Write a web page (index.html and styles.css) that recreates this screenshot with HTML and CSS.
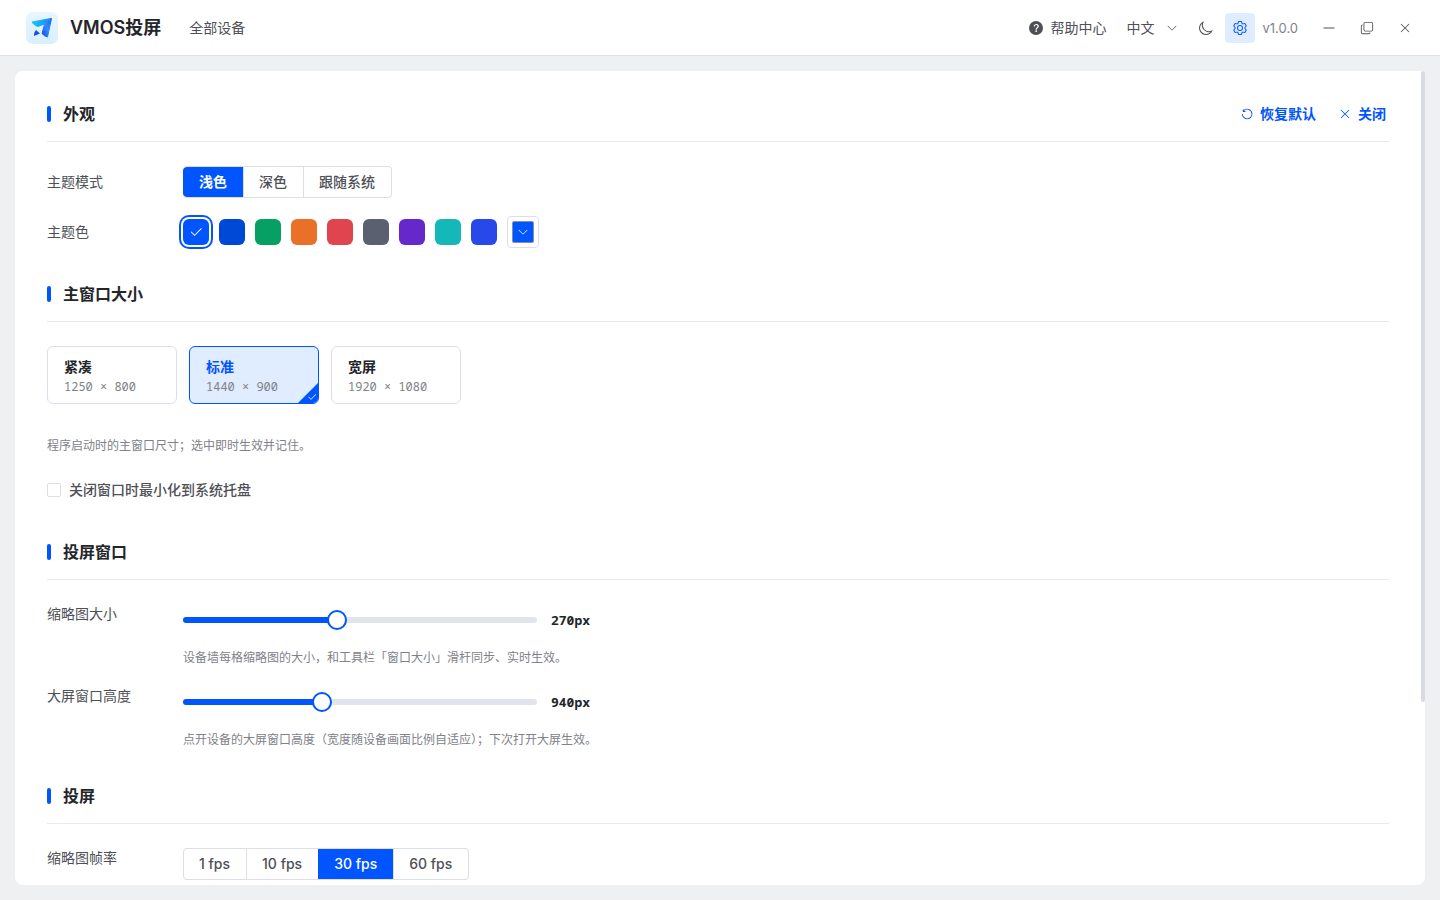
FILE: index.html
```html
<!DOCTYPE html>
<html lang="zh-CN">
<head>
<meta charset="utf-8">
<meta name="viewport" content="width=device-width, initial-scale=1">
<title>VMOS投屏</title>
<link rel="stylesheet" href="styles.css">
</head>
<body>
<svg class="sprite" aria-hidden="true">
  <symbol id="i-check" viewBox="0 0 1024 1024"><path d="M406.656 706.944 195.84 496.256a32 32 0 1 0-45.248 45.248l256 256 512-512a32 32 0 0 0-45.248-45.248L406.592 706.944z"/></symbol>
  <symbol id="i-down" viewBox="0 0 1024 1024"><path d="M831.872 340.864 512 652.672 192.128 340.864a30.592 30.592 0 0 0-42.752 0 29.12 29.12 0 0 0 0 41.6L489.664 714.24a32 32 0 0 0 44.672 0l340.288-331.712a29.12 29.12 0 0 0 0-41.728 30.592 30.592 0 0 0-42.752 0z"/></symbol>
  <symbol id="i-close" viewBox="0 0 1024 1024"><path d="M764.288 214.592 512 466.88 259.712 214.592a31.936 31.936 0 0 0-45.12 45.12L466.752 512 214.528 764.224a31.936 31.936 0 1 0 45.12 45.184L512 557.184l252.288 252.288a31.936 31.936 0 0 0 45.12-45.12L557.12 512.064l252.288-252.352a31.936 31.936 0 1 0-45.12-45.184z"/></symbol>
  <symbol id="i-help" viewBox="0 0 1024 1024"><path d="M512 64a448 448 0 1 1 0 896 448 448 0 0 1 0-896m23.744 191.488c-52.096 0-92.928 14.784-123.2 44.352-30.976 29.568-45.76 70.4-45.76 122.496h80.256c0-29.568 5.632-52.8 17.6-68.992 13.376-19.712 35.2-28.864 66.176-28.864 23.936 0 42.944 6.336 56.32 19.712 12.672 13.376 19.712 31.68 19.712 54.912 0 17.6-6.336 34.496-19.008 49.984l-8.448 9.856c-45.76 40.832-73.216 70.4-82.368 89.408-9.856 19.008-14.08 42.24-14.08 68.992v9.856h80.96v-9.856c0-16.896 3.52-31.68 10.56-45.76 6.336-12.672 15.488-24.64 28.16-35.2 33.792-29.568 54.208-48.576 60.544-55.616 16.896-22.528 26.048-51.392 26.048-86.592 0-42.944-14.08-76.736-42.24-101.376-28.16-25.344-65.472-37.312-111.232-37.312m-12.672 406.208a54.272 54.272 0 0 0-38.72 14.784 49.408 49.408 0 0 0-15.488 38.016c0 15.488 4.928 28.16 15.488 38.016A54.848 54.848 0 0 0 523.072 768c15.488 0 28.16-4.928 38.72-14.784a51.52 51.52 0 0 0 16.192-38.72 51.968 51.968 0 0 0-15.488-38.016 55.936 55.936 0 0 0-39.424-14.784z"/></symbol>
  <symbol id="i-moon" viewBox="0 0 1024 1024"><path d="M240.448 240.448a384 384 0 1 0 559.424 525.696 448 448 0 0 1-542.016-542.08 390.592 390.592 0 0 0-17.408 16.384zm181.056 362.048a384 384 0 0 0 525.632 16.384A448 448 0 1 1 405.056 76.8a384 384 0 0 0 16.448 525.696z"/></symbol>
  <symbol id="i-gear" viewBox="0 0 1024 1024"><path d="M600.704 64a32 32 0 0 1 30.464 22.208l35.2 109.376c14.784 7.232 28.928 15.36 42.432 24.512l112.384-24.192a32 32 0 0 1 34.432 15.36L944.32 364.8a32 32 0 0 1-4.032 37.504l-77.12 85.12a357.12 357.12 0 0 1 0 49.024l77.12 85.248a32 32 0 0 1 4.032 37.504l-88.704 153.6a32 32 0 0 1-34.432 15.296L708.8 803.904c-13.44 9.088-27.648 17.28-42.368 24.512l-35.264 109.376A32 32 0 0 1 600.704 960H423.296a32 32 0 0 1-30.464-22.208L357.696 828.48a351.616 351.616 0 0 1-42.56-24.64l-112.32 24.256a32 32 0 0 1-34.432-15.36L79.68 659.2a32 32 0 0 1 4.032-37.504l77.12-85.248a357.12 357.12 0 0 1 0-48.896l-77.12-85.248A32 32 0 0 1 79.68 364.8l88.704-153.6a32 32 0 0 1 34.432-15.296l112.32 24.256c13.568-9.152 27.776-17.408 42.56-24.64l35.2-109.312A32 32 0 0 1 423.232 64H600.64zm-23.424 64H446.72l-36.352 113.088-24.512 11.968a294.113 294.113 0 0 0-34.816 20.096l-22.656 15.36-116.224-25.088-65.28 113.152 79.68 88.192-1.92 27.136a293.12 293.12 0 0 0 0 40.192l1.92 27.136-79.808 88.192 65.344 113.152 116.224-25.024 22.656 15.296a294.113 294.113 0 0 0 34.816 20.096l24.512 11.968L446.72 896h130.688l36.48-113.152 24.448-11.904a288.282 288.282 0 0 0 34.752-20.096l22.592-15.296 116.288 25.024 65.28-113.152-79.744-88.192 1.92-27.136a293.12 293.12 0 0 0 0-40.256l-1.92-27.136 79.808-88.128-65.344-113.152-116.288 24.96-22.592-15.232a287.616 287.616 0 0 0-34.752-20.096l-24.448-11.904L577.344 128zM512 320a192 192 0 1 1 0 384 192 192 0 0 1 0-384m0 64a128 128 0 1 0 0 256 128 128 0 0 0 0-256"/></symbol>
  <symbol id="i-reset" viewBox="0 0 1024 1024"><path d="M289.088 296.704h92.992a32 32 0 0 1 0 64H232.96a32 32 0 0 1-32-32V179.712a32 32 0 0 1 64 0v50.56a384 384 0 0 1 643.84 282.88 384 384 0 0 1-383.936 384 384 384 0 0 1-384-384h64a320 320 0 1 0 640 0 320 320 0 0 0-555.712-216.448z"/></symbol>
  <symbol id="i-minus" viewBox="0 0 1024 1024"><path d="M128 544h768a32 32 0 1 0 0-64H128a32 32 0 0 0 0 64"/></symbol>
  <symbol id="i-restore" viewBox="0 0 1024 1024"><path d="M768 832a128 128 0 0 1-128 128H192A128 128 0 0 1 64 832V384a128 128 0 0 1 128-128v64a64 64 0 0 0-64 64v448a64 64 0 0 0 64 64h448a64 64 0 0 0 64-64z"/><path d="M384 128a64 64 0 0 0-64 64v448a64 64 0 0 0 64 64h448a64 64 0 0 0 64-64V192a64 64 0 0 0-64-64zm0-64h448a128 128 0 0 1 128 128v448a128 128 0 0 1-128 128H384a128 128 0 0 1-128-128V192A128 128 0 0 1 384 64"/></symbol>
</svg>

<header class="topbar">
  <svg class="logo" viewBox="0 0 32 32" aria-hidden="true">
    <defs>
      <linearGradient id="lg-bg" x1="0" y1="0" x2="0" y2="1"><stop offset="0" stop-color="#e9f5ff"/><stop offset="1" stop-color="#d9efff"/></linearGradient>
      <linearGradient id="lg-wing" x1="0" y1="0" x2="1" y2="0"><stop offset="0" stop-color="#12c8fb"/><stop offset="1" stop-color="#1a86ff"/></linearGradient>
      <linearGradient id="lg-body" x1="1" y1="0" x2="0" y2="1"><stop offset="0" stop-color="#1b62ee"/><stop offset="0.5" stop-color="#2f8cff"/><stop offset="1" stop-color="#1546e0"/></linearGradient>
    </defs>
    <rect width="32" height="32" rx="7" fill="url(#lg-bg)"/>
    <path d="M6 10 25 6.500 18.500 12 12 14.500Q9 13.500 7.500 12Z" fill="url(#lg-wing)" stroke="url(#lg-wing)" stroke-linejoin="round"/>
    <path d="M25.500 6.500 21.500 25Q18 24 16 21.500L18.500 12.500Z" fill="url(#lg-body)" stroke="url(#lg-body)" stroke-linejoin="round"/>
    <path d="M10 18 14 21.500 8 24Q8 20 10 18Z" fill="#1c4ce0"/>
  </svg>
  <h1 class="brand">VMOS投屏</h1>
  <nav class="nav"><a class="nav-link" href="#devices">全部设备</a></nav>
  <div class="tools">
    <a class="help" href="#help"><svg class="icon icon-lg"><use href="#i-help"/></svg>帮助中心</a>
    <div class="language">
      <select class="language-select" aria-label="语言"><option>中文</option></select>
      <svg class="icon icon-sm language-arrow"><use href="#i-down"/></svg>
    </div>
    <button class="tool" type="button" aria-label="深色模式"><svg class="icon icon-lg"><use href="#i-moon"/></svg></button>
    <button class="tool tool-active" type="button" aria-label="设置"><svg class="icon icon-lg"><use href="#i-gear"/></svg></button>
    <span class="version">v1.0.0</span>
    <div class="window-controls">
      <button class="window-btn" type="button" aria-label="最小化"><svg class="icon"><use href="#i-minus"/></svg></button>
      <button class="window-btn" type="button" aria-label="还原"><svg class="icon"><use href="#i-restore"/></svg></button>
      <button class="window-btn" type="button" aria-label="关闭窗口"><svg class="icon"><use href="#i-close"/></svg></button>
    </div>
  </div>
</header>

<main class="panel">
  <div class="scroll">
    <section class="section">
      <header class="section-head">
        <h2 class="section-title">外观</h2>
        <div class="actions">
          <button class="action" type="button"><svg class="icon"><use href="#i-reset"/></svg>恢复默认</button>
          <button class="action" type="button"><svg class="icon"><use href="#i-close"/></svg>关闭</button>
        </div>
      </header>
      <div class="section-body">
        <div class="row row-middle">
          <span class="label" id="l-mode">主题模式</span>
          <div class="segmented" role="radiogroup" aria-labelledby="l-mode">
            <label class="segment"><input class="hidden-input" type="radio" name="mode" checked><span class="segment-strong">浅色</span></label>
            <label class="segment"><input class="hidden-input" type="radio" name="mode">深色</label>
            <label class="segment"><input class="hidden-input" type="radio" name="mode">跟随系统</label>
          </div>
        </div>
        <div class="row row-middle">
          <span class="label">主题色</span>
          <div class="swatches">
            <button class="swatch swatch-on" type="button" aria-label="亮蓝"><svg class="icon"><use href="#i-check"/></svg></button>
            <button class="swatch swatch-navy" type="button" aria-label="深蓝"></button>
            <button class="swatch swatch-green" type="button" aria-label="绿"></button>
            <button class="swatch swatch-orange" type="button" aria-label="橙"></button>
            <button class="swatch swatch-red" type="button" aria-label="红"></button>
            <button class="swatch swatch-gray" type="button" aria-label="灰"></button>
            <button class="swatch swatch-purple" type="button" aria-label="紫"></button>
            <button class="swatch swatch-teal" type="button" aria-label="青"></button>
            <button class="swatch swatch-indigo" type="button" aria-label="靛蓝"></button>
            <button class="picker" type="button" aria-label="自定义颜色"><span class="picker-color"><svg class="icon icon-sm"><use href="#i-down"/></svg></span></button>
          </div>
        </div>
      </div>
    </section>

    <section class="section">
      <header class="section-head"><h2 class="section-title">主窗口大小</h2></header>
      <div class="section-body">
        <div class="size-group">
          <div class="sizes" role="radiogroup" aria-label="主窗口大小">
            <label class="size"><input class="hidden-input" type="radio" name="size"><span class="size-name">紧凑</span><span class="size-value">1250 × 800</span></label>
            <label class="size"><input class="hidden-input" type="radio" name="size" checked><span class="size-name">标准</span><span class="size-value">1440 × 900</span><span class="size-corner"><svg class="icon icon-xs"><use href="#i-check"/></svg></span></label>
            <label class="size"><input class="hidden-input" type="radio" name="size"><span class="size-name">宽屏</span><span class="size-value">1920 × 1080</span></label>
          </div>
          <p class="hint">程序启动时的主窗口尺寸；选中即时生效并记住。</p>
        </div>
        <label class="check"><input class="checkbox" type="checkbox">关闭窗口时最小化到系统托盘</label>
      </div>
    </section>

    <section class="section">
      <header class="section-head"><h2 class="section-title">投屏窗口</h2></header>
      <div class="section-body">
        <div class="row">
          <label class="label" for="thumb-size">缩略图大小</label>
          <div class="field">
            <div class="slider-line">
              <input class="slider" id="thumb-size" type="range" min="150" max="429" value="270" style="--fill: 43%">
              <output class="slider-value" for="thumb-size">270px</output>
            </div>
            <p class="hint">设备墙每格缩略图的大小，和工具栏「窗口大小」滑杆同步、实时生效。</p>
          </div>
        </div>
        <div class="row">
          <label class="label" for="window-height">大屏窗口高度</label>
          <div class="field">
            <div class="slider-line">
              <input class="slider" id="window-height" type="range" min="600" max="1477" value="940" style="--fill: 39%">
              <output class="slider-value" for="window-height">940px</output>
            </div>
            <p class="hint">点开设备的大屏窗口高度（宽度随设备画面比例自适应）；下次打开大屏生效。</p>
          </div>
        </div>
      </div>
    </section>

    <section class="section">
      <header class="section-head"><h2 class="section-title">投屏</h2></header>
      <div class="section-body">
        <div class="row">
          <span class="label" id="l-fps">缩略图帧率</span>
          <div class="segmented" role="radiogroup" aria-labelledby="l-fps">
            <label class="segment"><input class="hidden-input" type="radio" name="fps">1 fps</label>
            <label class="segment"><input class="hidden-input" type="radio" name="fps">10 fps</label>
            <label class="segment"><input class="hidden-input" type="radio" name="fps" checked>30 fps</label>
            <label class="segment"><input class="hidden-input" type="radio" name="fps">60 fps</label>
          </div>
        </div>
      </div>
    </section>
  </div>
  <div class="scroll-thumb" aria-hidden="true"></div>
</main>
</body>
</html>
```
FILE: styles.css
```css
:root {
  --primary: #0055ff;
  --primary-soft: #e0ecff;
  --title: #242529;
  --text: #4e5056;
  --muted: #808288;
  --border: #dcdfe8;
  --line: #e8eaf2;
  --mono: "Noto Sans Mono", "DejaVu Sans Mono", monospace;
}

* { box-sizing: border-box; }

body {
  display: flex;
  flex-direction: column;
  height: 100vh;
  margin: 0;
  background: #eff0f2;
  color: var(--text);
  font: 14px/20px Inter, "Noto Sans CJK SC", sans-serif;
}

h1, h2, p { margin: 0; }
a { color: inherit; text-decoration: none; }

button {
  display: flex;
  align-items: center;
  justify-content: center;
  margin: 0;
  padding: 0;
  border: 0;
  background: none;
  color: inherit;
  font: inherit;
  cursor: pointer;
}

.sprite { position: absolute; width: 0; height: 0; }
.icon { flex: none; width: 14px; height: 14px; fill: currentColor; }
.icon-lg { width: 16px; height: 16px; }
.icon-sm { width: 12px; height: 12px; }
.icon-xs { width: 10px; height: 10px; }
.hidden-input { position: absolute; opacity: 0; pointer-events: none; }

/* Top bar */
.topbar {
  display: flex;
  flex: none;
  align-items: center;
  height: 56px;
  padding: 0 16px 0 26px;
  border-bottom: 1px solid #dfe1e7;
  background: #fff;
}
.logo { flex: none; width: 32px; height: 32px; }
.brand {
  margin-left: 12px;
  color: var(--title);
  font-size: 18px;
  font-weight: 600;
  line-height: 24px;
}
.nav { margin-left: 28px; }
.tools { display: flex; align-items: center; margin-left: auto; }
.help { display: flex; align-items: center; gap: 7px; margin-right: 20px; }
.language { display: flex; position: relative; align-items: center; margin-right: 13px; }
.language-select {
  appearance: none;
  width: 51px;
  height: 30px;
  padding: 0;
  border: 0;
  background: none;
  color: inherit;
  font: inherit;
}
.language-arrow { position: absolute; right: 0; pointer-events: none; }
.tool { width: 30px; height: 30px; margin-right: 4px; border-radius: 4px; }
.tool-active { margin-right: 8px; background: var(--primary-soft); color: var(--primary); }
.version { color: var(--muted); font-size: 13px; }
.window-controls { display: flex; margin-left: 12px; }
.window-btn { width: 38px; height: 30px; }

/* Settings panel */
.panel {
  display: flex;
  position: relative;
  flex: 1;
  min-height: 0;
  margin: 15px;
  overflow: hidden;
  border-radius: 8px 2px 8px 8px;
  background: #fff;
}
.scroll {
  display: flex;
  flex: 1;
  flex-direction: column;
  gap: 34px;
  padding: 31px 36px 171px 32px;
  overflow-x: hidden;
  overflow-y: auto;
  scrollbar-width: none;
}
.scroll-thumb {
  position: absolute;
  top: 0;
  right: 0;
  width: 4px;
  height: 77.5%;
  border-radius: 2px;
  background: #d8dae4;
}

.section { flex: none; }
.section-head {
  display: flex;
  align-items: center;
  justify-content: space-between;
  padding-bottom: 15px;
  border-bottom: 1px solid var(--line);
}
.section-title {
  display: flex;
  align-items: center;
  gap: 12px;
  color: var(--title);
  font-size: 16px;
  font-weight: 600;
  line-height: 24px;
}
.section-title::before {
  width: 4px;
  height: 16px;
  border-radius: 2px;
  background: var(--primary);
  content: "";
}
.section-body { display: flex; flex-direction: column; gap: 18px; padding-top: 24px; }
.actions { display: flex; gap: 16px; }
.action { gap: 6px; padding: 0 3px; color: var(--primary); font-weight: 600; }

.row { display: flex; align-items: flex-start; }
.row-middle { align-items: center; }
.label { flex: none; width: 136px; }
.hint { color: var(--muted); font-size: 12px; line-height: 20px; }

/* Segmented radio group */
.segmented {
  display: flex;
  height: 32px;
  overflow: hidden;
  border: 1px solid var(--border);
  border-left: 0;
  border-radius: 4px;
}
.segment {
  padding: 0 16px 0 15px;
  border-left: 1px solid var(--border);
  font-weight: 500;
  line-height: 30px;
  cursor: pointer;
}
.segment:first-child { border-radius: 4px 0 0 4px; }
.segment:has(:checked) { border-color: var(--primary); background: var(--primary); color: #fff; }
.segment-strong { font-weight: 600; }

/* Theme colours */
.swatches { display: flex; align-items: center; gap: 10px; }
.swatch { width: 26px; height: 26px; border-radius: 6px; color: #fff; }
.swatch-on { background: var(--primary); box-shadow: 0 0 0 2px #fff, 0 0 0 4px var(--primary); }
.swatch-navy { background: #0048d6; }
.swatch-green { background: #069f64; }
.swatch-orange { background: #ea7029; }
.swatch-red { background: #e0444f; }
.swatch-gray { background: #5a6070; }
.swatch-purple { background: #6627cb; }
.swatch-teal { background: #14b8b8; }
.swatch-indigo { background: #2848ea; }
.picker { width: 32px; height: 32px; border: 1px solid var(--border); border-radius: 4px; }
.picker-color {
  display: flex;
  align-items: center;
  justify-content: center;
  width: 22px;
  height: 22px;
  border: 1px solid #8490ac;
  border-radius: 2px;
  background: var(--primary);
  color: #fff;
}

/* Window size cards */
.size-group { display: flex; flex-direction: column; gap: 32px; }
.sizes { display: flex; gap: 12px; }
.size {
  display: flex;
  position: relative;
  flex-direction: column;
  width: 130px;
  padding: 10px 16px 6px;
  overflow: hidden;
  border: 1px solid var(--border);
  border-radius: 6px;
  cursor: pointer;
}
.size-name { color: var(--title); font-weight: 600; }
.size-value { color: var(--muted); font: 12px/20px var(--mono); }
.size:has(:checked) { border-color: var(--primary); background: var(--primary-soft); }
.size:has(:checked) .size-name { color: var(--primary); }
.size-corner {
  display: flex;
  position: absolute;
  right: 0;
  bottom: 0;
  align-items: flex-end;
  justify-content: flex-end;
  width: 20px;
  height: 20px;
  padding: 1px;
  background: var(--primary);
  clip-path: polygon(100% 0, 100% 100%, 0 100%);
  color: #fff;
}

.check { display: flex; align-items: center; gap: 8px; height: 32px; font-weight: 500; }
.checkbox {
  appearance: none;
  width: 14px;
  height: 14px;
  margin: 0;
  border: 1px solid var(--border);
  border-radius: 2px;
  background: #fff;
}
.checkbox:checked { border-color: var(--primary); background: var(--primary); }

/* Sliders */
.field { display: flex; flex: 1; flex-direction: column; gap: 12px; }
.slider-line { display: flex; align-items: center; gap: 14px; height: 32px; }
.slider { appearance: none; width: 354px; height: 20px; margin: 0; background: none; cursor: pointer; }
.slider::-webkit-slider-runnable-track {
  height: 6px;
  border-radius: 3px;
  background: linear-gradient(to right, var(--primary) var(--fill), #e1e4eb var(--fill));
}
.slider::-webkit-slider-thumb {
  appearance: none;
  width: 20px;
  height: 20px;
  margin-top: -7px;
  border: 2px solid var(--primary);
  border-radius: 50%;
  background: #fff;
}
.slider-value { color: var(--title); font: 700 13px/20px var(--mono); }
```
